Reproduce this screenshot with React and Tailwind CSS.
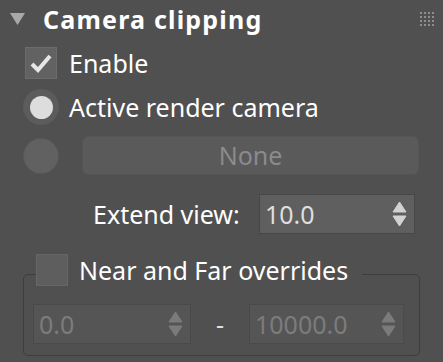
import React from "react";

function Arrows({ dim }) {
  const c = dim ? "#7b7b7b" : "#d2d2d2";
  return (
    <svg width="15" height="26" viewBox="0 0 15 26" className="shrink-0">
      <path d="M7.5 1 L14 11 L1 11 Z" fill={c} stroke={c} strokeWidth="1" strokeLinejoin="round" />
      <path d="M1 15 L14 15 L7.5 25 Z" fill={c} stroke={c} strokeWidth="1" strokeLinejoin="round" />
    </svg>
  );
}

function Spinner({ value, dim, className }) {
  return (
    <div
      className={`flex items-center justify-between border pl-[5px] pr-[7px] ${
        dim ? "bg-[#555555] border-[#4a4a4a] text-[#7c7c7c]" : "bg-[#5f5f5f] border-[#474747] text-[#dedede]"
      } ${className}`}
    >
      <span className="text-[25px] leading-none">{value}</span>
      <Arrows dim={dim} />
    </div>
  );
}

export default function App() {
  return (
    <div
      className="w-[443px] h-[362px] bg-[#505050] text-white overflow-hidden flex flex-col"
      style={{ fontFamily: '"Noto Sans", "Open Sans", sans-serif' }}
    >
      {/* header */}
      <div className="h-[38px] flex items-center pl-[10px] pr-[9px]">
        <svg width="15" height="13" viewBox="0 0 15 13" className="shrink-0">
          <path d="M0 0 H15 L7.5 12 Z" fill="#a9a9a9" />
        </svg>
        <span className="ml-[18px] text-[25px] font-bold leading-none tracking-[1.2px]">Camera clipping</span>
        <div className="ml-auto grid grid-cols-4 gap-[2px]">
          {Array.from({ length: 16 }).map((_, i) => (
            <div key={i} className="w-[2px] h-[2px] bg-[#8e8e8e]" />
          ))}
        </div>
      </div>

      {/* enable */}
      <div className="mt-[9px] flex items-center pl-[25px] h-[32px]">
        <div className="w-[32px] h-[32px] bg-[#626262] border border-[#6b6b6b] flex items-center justify-center">
          <svg width="22" height="20" viewBox="0 0 22 20">
            <path d="M2 11 L8 17 L20 3" fill="none" stroke="#e6e6e6" strokeWidth="4" strokeLinejoin="miter" />
          </svg>
        </div>
        <span className="ml-[12px] text-[25px] leading-none">Enable</span>
      </div>

      {/* active render camera */}
      <div className="mt-[10px] flex items-center pl-[23px] h-[36px]">
        <div className="w-[36px] h-[36px] rounded-full bg-[#5c5c5c] flex items-center justify-center">
          <div className="w-[23px] h-[23px] rounded-full bg-[#dddddd]" />
        </div>
        <span className="ml-[10px] text-[25px] leading-none">Active render camera</span>
      </div>

      {/* none */}
      <div className="mt-[11px] flex items-center pl-[23px] pr-[24px] h-[39px]">
        <div className="w-[36px] h-[36px] rounded-full bg-[#616161] border border-[#595959]" />
        <div className="ml-[23px] flex-1 h-[39px] rounded-[6px] bg-[#5a5a5a] border border-[#555555] flex items-center justify-center text-[25px] text-[#8b8b8b] leading-none">
          None
        </div>
      </div>

      {/* extend view */}
      <div className="mt-[19px] flex items-center h-[40px] pl-[93px]">
        <span className="text-[25px] leading-none">Extend view:</span>
        <Spinner value="10.0" className="ml-auto mr-[28px] w-[156px] h-[40px]" />
      </div>

      {/* group */}
      <div className="mt-[20px] mx-[23px] relative h-[104px]">
        <div className="absolute left-0 right-0 top-[20px] bottom-[2px] border border-[#3d3d3d] rounded-[5px]" />
        <div className="relative flex items-center h-[32px] ml-[13px]">
          <div className="w-[32px] h-[32px] bg-[#5e5e5e] border border-[#666666]" />
          <span className="bg-[#505050] pl-[11px] pr-[14px] text-[25px] leading-none">Near and Far overrides</span>
        </div>
        <div className="relative mt-[18px] flex items-center pl-[10px] pr-[16px]">
          <Spinner value="0.0" dim className="w-[158px] h-[40px]" />
          <span className="flex-1 text-center text-[25px] leading-none text-[#e0e0e0]">-</span>
          <Spinner value="10000.0" dim className="w-[155px] h-[40px]" />
        </div>
      </div>
    </div>
  );
}
